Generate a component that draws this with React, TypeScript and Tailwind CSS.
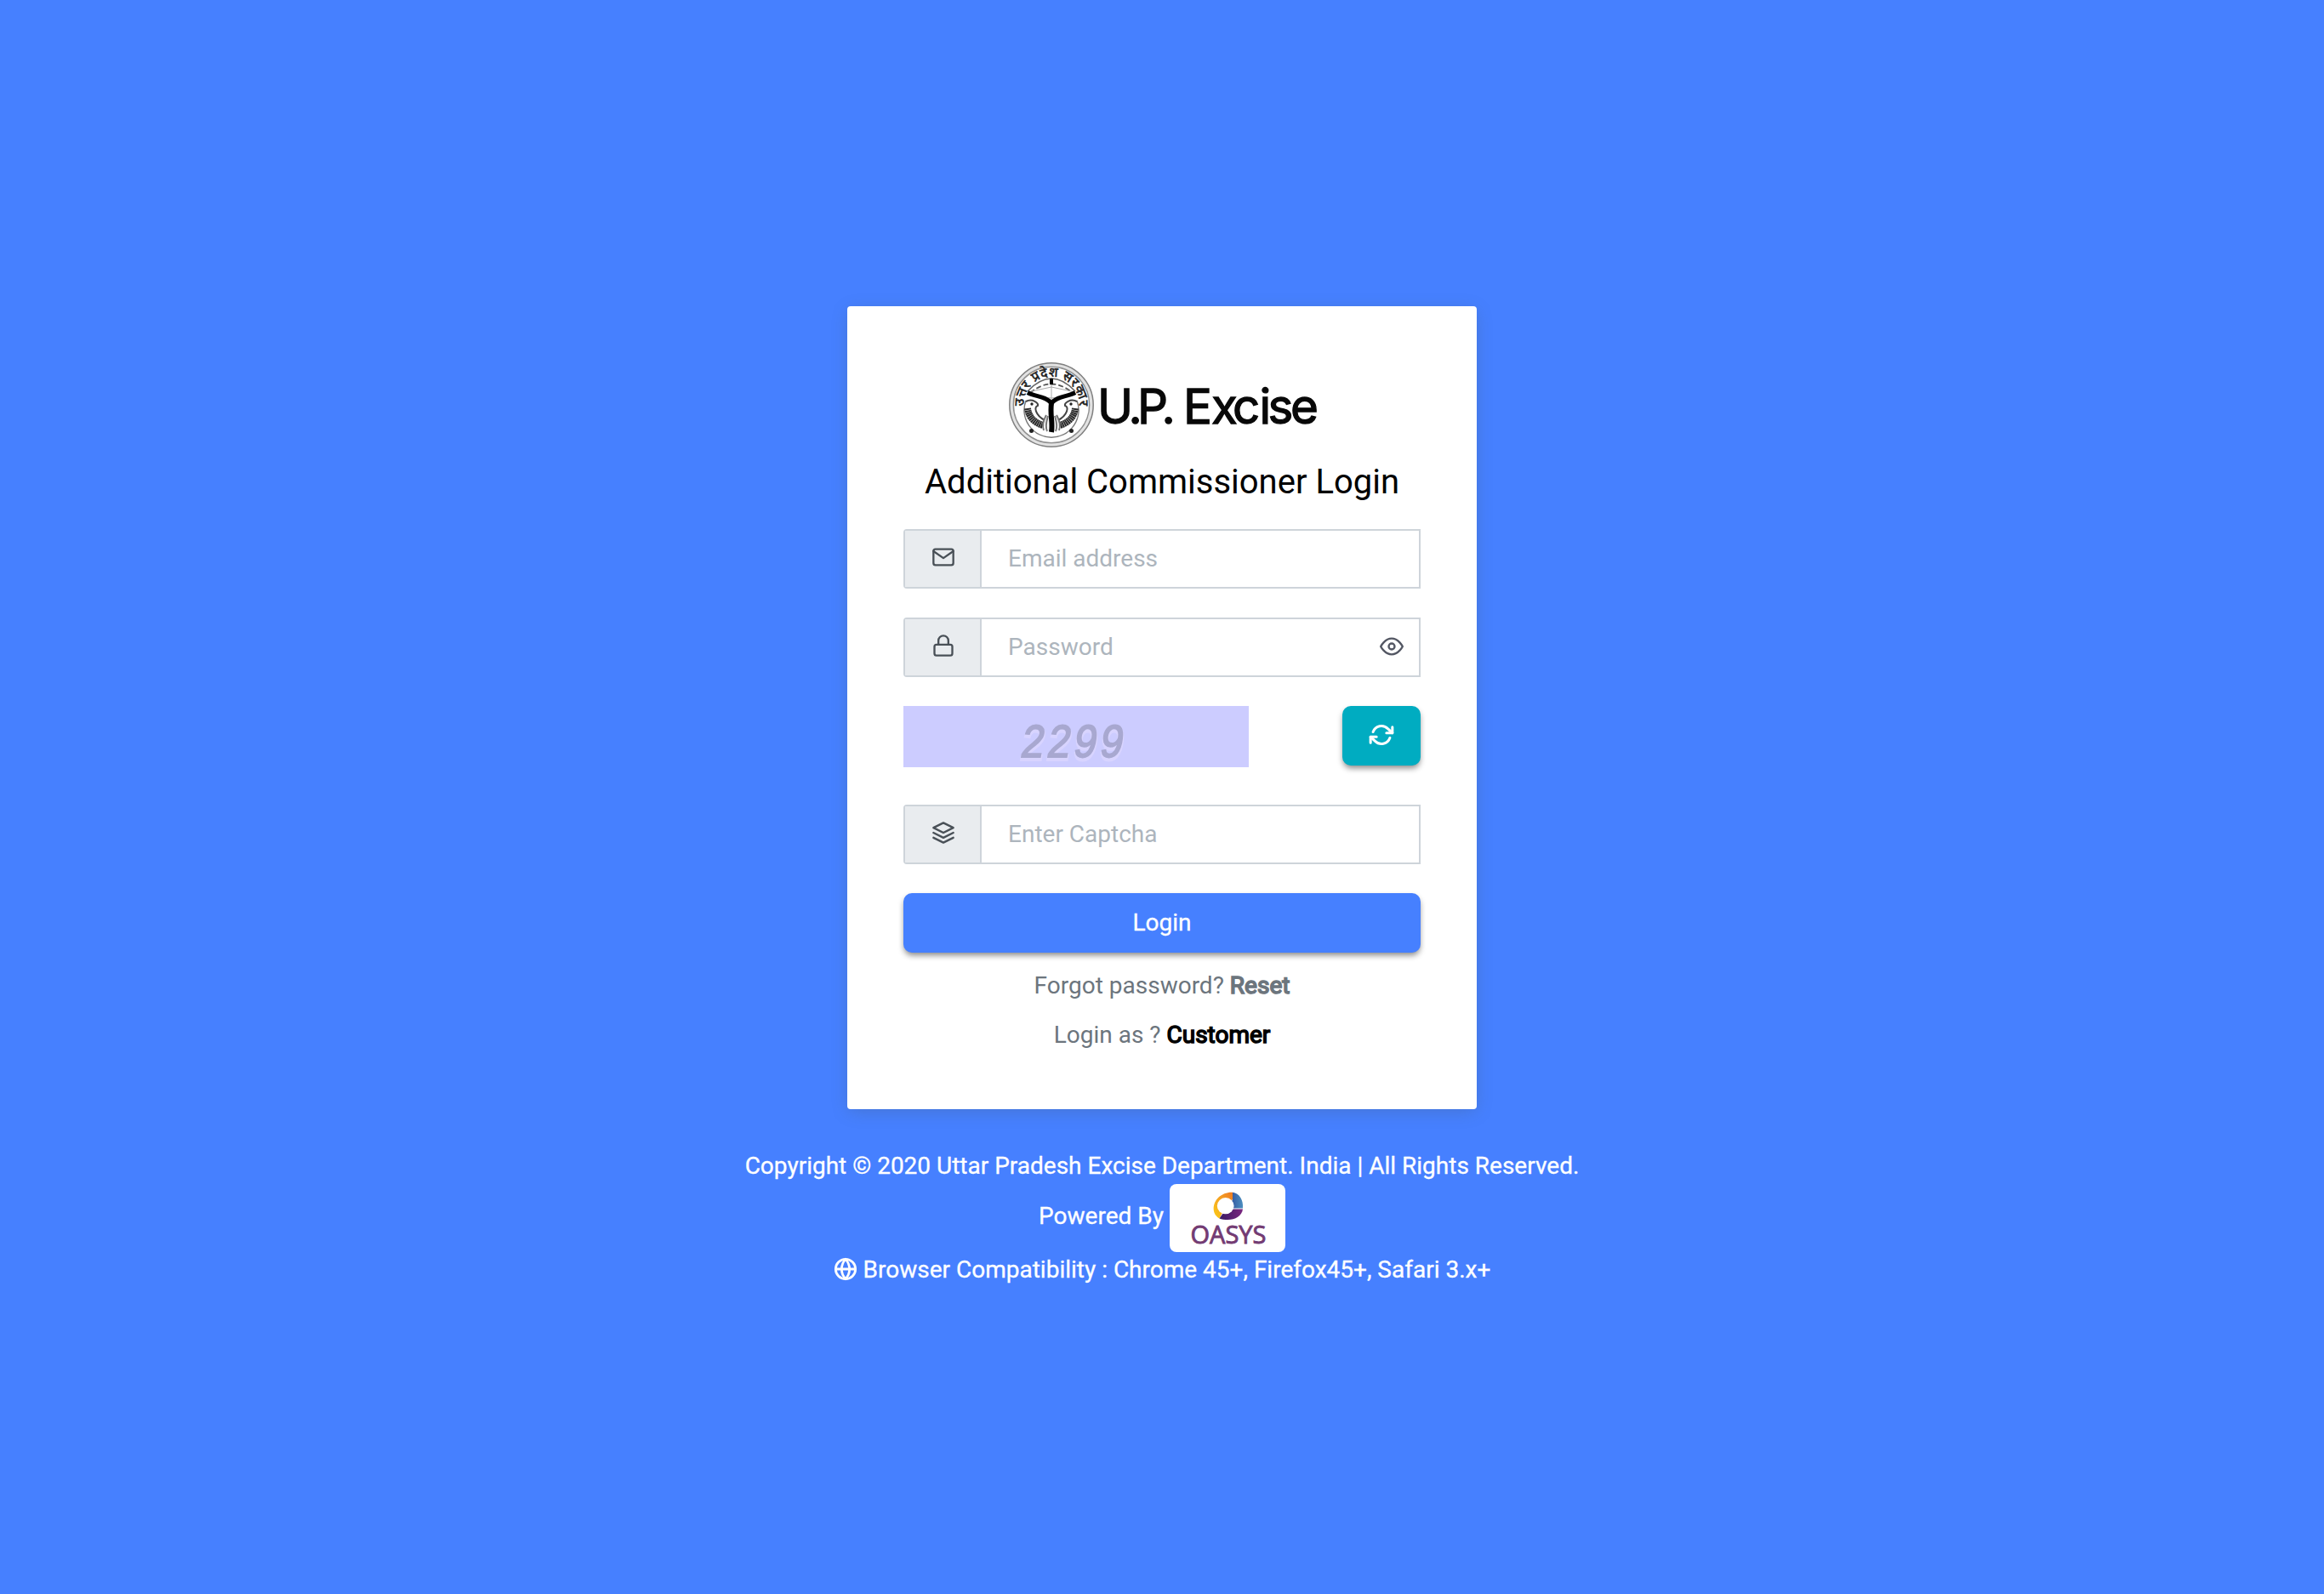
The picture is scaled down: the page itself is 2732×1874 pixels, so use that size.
import React from "react";

const feather = {
  fill: "none",
  stroke: "currentColor",
  strokeWidth: 2,
  strokeLinecap: "round" as const,
  strokeLinejoin: "round" as const,
  viewBox: "0 0 24 24",
};

function MailIcon() {
  return (
    <svg {...feather} className="size-7 overflow-visible">
      <path d="M4 4h16c1.100 0 2 .9 2 2v12c0 1.100-.9 2-2 2H4c-1.100 0-2-.9-2-2V6c0-1.100.9-2 2-2z" />
      <polyline points="22,6 12,13 2,6" />
    </svg>
  );
}

function LockIcon() {
  return (
    <svg {...feather} className="size-7 overflow-visible">
      <rect x="3" y="11" width="18" height="11" rx="2" />
      <path d="M7 11V7a5 5 0 0 1 10 0v4" />
    </svg>
  );
}

function LayersIcon() {
  return (
    <svg {...feather} className="size-7 overflow-visible">
      <polygon points="12 2 2 7 12 12 22 7 12 2" />
      <polyline points="2 17 12 22 22 17" />
      <polyline points="2 12 12 17 22 12" />
    </svg>
  );
}

function EyeIcon() {
  return (
    <svg {...feather} className="size-7 overflow-visible">
      <path d="M1 12s4-8 11-8 11 8 11 8-4 8-11 8-11-8-11-8z" />
      <circle cx="12" cy="12" r="3" />
    </svg>
  );
}

function RefreshIcon() {
  return (
    <svg {...feather} strokeWidth={2.6} className="size-7 overflow-visible">
      <polyline points="23 4 23 10 17 10" />
      <polyline points="1 20 1 14 7 14" />
      <path d="M3.51 9a9 9 0 0 1 14.850-3.360L23 10M1 14l4.640 4.360A9 9 0 0 0 20.490 15" />
    </svg>
  );
}

function GlobeIcon() {
  return (
    <svg {...feather} strokeWidth={2.4} className="inline-block size-7 overflow-visible align-[-4px]">
      <circle cx="12" cy="12" r="10" />
      <path d="M2 12h20" />
      <path d="M12 2a15.300 15.300 0 0 1 4 10 15.300 15.300 0 0 1-4 10 15.300 15.300 0 0 1-4-10 15.300 15.300 0 0 1 4-10z" />
    </svg>
  );
}

function Emblem() {
  return (
    <svg viewBox="0 0 100 100" className="size-[100px] shrink-0" fill="none" stroke="#000">
      <defs>
        <path id="arc" d="M18 55 A32.500 32.500 0 1 1 82 55" />
      </defs>
      <circle cx="50" cy="50" r="47.500" stroke="#e2e2e2" strokeWidth="4" />
      <circle cx="50" cy="50" r="49.200" stroke="#808080" strokeWidth="1.500" />
      <circle cx="50" cy="50" r="44.700" stroke="#909090" strokeWidth="1.500" />
      <path d="M20 45A32 32 0 1 0 80 45" stroke="#777" strokeWidth="1.500" />
      <path d="M22 34Q50 4 78 34" stroke="#666" strokeWidth="1.500" />
      <path d="M25 36Q50 15 75 36" stroke="#555" strokeWidth="1.800" strokeDasharray="6 3" />
      <path d="M50 20V46 M22 35L50 29L78 35 M24 36Q37 42 50 42Q63 42 76 36" stroke="#aaa" strokeWidth="1" />
      <path d="M50 19v7" strokeWidth="4" />
      <path d="M50 82C52 70 48 62 50 48" strokeWidth="6" />
      <path d="M22 35.500C32 41 42 39 50 48C58 39 68 41 78 35.500" strokeWidth="5" />
      <g id="fish">
        <path d="M22 54C23 64 30 71 40 74" stroke="#2a2a2a" strokeWidth="8" strokeDasharray="2 .4" />
        <path d="M20 46C28 42 35 48 34 51C29 52 31 62 42 68" stroke="#444" strokeWidth="2" />
        <path d="M41 80C38 72 42 66 44 62M45 81C42 74 45 67 46 63" stroke="#777" strokeWidth="2" />
        <circle cx="27" cy="49" r="1.700" fill="#222" stroke="none" />
      </g>
      <use href="#fish" transform="translate(100 0) scale(-1 1)" />
      <circle cx="26.500" cy="80.500" r="2.500" fill="#222" stroke="none" />
      <circle cx="73.500" cy="80.500" r="2.500" fill="#222" stroke="none" />
      <text fill="#222" stroke="#222" strokeWidth=".6" fontSize="15.500" textAnchor="middle" className="font-['Noto_Sans',sans-serif]">
        <textPath href="#arc" startOffset="50%" textLength="106">उत्तर प्रदेश सरकार</textPath>
      </text>
    </svg>
  );
}

function OasysLogo() {
  return (
    <svg viewBox="0 0 136 80" className="block h-[80px] w-[136px] shrink-0 rounded-lg bg-white">
      <defs>
        <linearGradient id="gold" x1="1" y1="0" x2="0" y2="1">
          <stop offset="0" stopColor="#ee7a22" />
          <stop offset=".5" stopColor="#f5a623" />
          <stop offset="1" stopColor="#fbcb14" />
        </linearGradient>
        <linearGradient id="blue">
          <stop offset="0" stopColor="#2f4f9c" />
          <stop offset="1" stopColor="#4c8fc0" />
        </linearGradient>
        <linearGradient id="plum">
          <stop offset="0" stopColor="#3a1a62" />
          <stop offset="1" stopColor="#7a2680" />
        </linearGradient>
      </defs>
      <path d="M74 9.700C62 9 51 18 51.700 30C52 35 55 38.500 58.500 40.500L66 26L74 18Z" fill="url(#gold)" />
      <path d="M74 9.700C82 10.500 87 19 86 28.500H70L74 18Z" fill="url(#blue)" />
      <path d="M86 29.500C85 37.500 77 42 68.500 42C64.500 42 61 41.500 58.500 40.500L66 29.500Z" fill="url(#plum)" />
      <ellipse cx="65.700" cy="25.700" rx="9.900" ry="9.600" fill="#fff" />
      <text x="69" y="69.800" textAnchor="middle" fontSize="30" textLength="89" lengthAdjust="spacingAndGlyphs" fill="#733b73" stroke="#733b73" strokeWidth=".9" className="font-['Open_Sans',sans-serif]">
        OASYS
      </text>
    </svg>
  );
}

function Field({ icon, label, type = "text", trailing }: { icon: React.ReactNode; label: string; type?: string; trailing?: React.ReactNode }) {
  return (
    <div className="flex h-[70px] rounded-l-[4px] border-2 border-[#ced4da] bg-white">
      <span className="flex w-[90px] shrink-0 items-center justify-center border-r-2 border-[#ced4da] bg-[#e9ecef] pb-1 pl-px text-[#495057]">
        {icon}
      </span>
      <input
        type={type}
        placeholder={label}
        className="min-w-0 flex-1 bg-transparent pl-[31px] text-[28px] outline-none placeholder:text-[#adb5bd]"
      />
      {trailing && <span className="flex items-center pr-[18px] pb-[3px] text-[#535763]">{trailing}</span>}
    </div>
  );
}

export default function App() {
  return (
    <div className="flex h-[1874px] w-full flex-col items-center bg-[#4680ff] pt-[360px] font-[Roboto,sans-serif] text-[28px] leading-[42px]">
      <main className="flex h-[944px] w-[740px] shrink-0 flex-col rounded-[4px] bg-white px-[66px] pt-[66px] shadow-[0_4px_20px_-2px_rgba(69,90,100,0.3)]">
        <div className="flex h-[100px] items-center pl-[124px]">
          <Emblem />
          <svg viewBox="0 0 262 70" className="h-[70px] w-[262px] overflow-visible">
            <text x="4 40.500 51 79.500 82 105 138 163 194.500 204.500 231" y="57" fontSize="56.500" fill="#080808" stroke="#080808" strokeWidth="1.300" className="font-[Inter,sans-serif]">
              U.P. Excise
            </text>
          </svg>
        </div>
        <h1 className="mt-[17px] h-[48px] text-center text-[40px] leading-[48px] whitespace-nowrap text-black">Additional Commissioner Login</h1>
        <form className="mt-[31px] flex flex-col">
          <Field icon={<MailIcon />} label="Email address" />
          <div className="mt-[34px]">
            <Field icon={<LockIcon />} label="Password" type="password" trailing={<EyeIcon />} />
          </div>
          <div className="mt-[34px] flex h-[72px] items-start justify-between">
            <svg viewBox="0 0 406.400 72" className="h-[72px] w-[406.4px] overflow-visible bg-[#ccccff]">
              <g transform="translate(138 60) scale(.87 1)" fontSize="55" className="font-['Liberation_Mono',monospace] italic">
                <text x="0 35.500 71 106.500" y="2.500" fill="#d8d4ff" stroke="#d8d4ff" strokeWidth="4">2299</text>
                <text x="0 35.500 71 106.500" y="0" fill="#a8a8d0" stroke="#a8a8d0" strokeWidth="1.800">2299</text>
              </g>
            </svg>
            <button type="button" className="flex h-[70px] w-[92px] items-center justify-center rounded-[10px] bg-[#00acc1] pb-[3px] text-white shadow-[0_4px_7px_-1px_rgba(0,0,0,0.48)]">
              <RefreshIcon />
            </button>
          </div>
          <div className="mt-11">
            <Field icon={<LayersIcon />} label="Enter Captcha" />
          </div>
          <button type="button" className="mt-[34px] h-[70px] rounded-[10px] bg-[#4680ff] text-white shadow-[0_4px_7px_-1px_rgba(0,0,0,0.48)] [-webkit-text-stroke:0.3px_#fff]">
            Login
          </button>
        </form>
        <p className="mt-[18px] text-center text-[#6c757d]">
          Forgot password? <a className="[-webkit-text-stroke:1.6px_#6c757d]">Reset</a>
        </p>
        <p className="mt-4 text-center text-[#6c757d]">
          Login as ? <a className="text-black [-webkit-text-stroke:1.5px_#000]">Customer</a>
        </p>
      </main>
      <footer className="mt-[46px] text-center whitespace-nowrap text-white [-webkit-text-stroke:0.3px_#fff]">
        <p>Copyright © 2020 Uttar Pradesh Excise Department. India | All Rights Reserved.</p>
        <div className="flex h-[80px] items-center justify-center gap-[7px]">
          <span className="pb-1">Powered By</span>
          <OasysLogo />
        </div>
        <p>
          <GlobeIcon /> Browser Compatibility : Chrome 45+, Firefox45+, Safari 3.x+
        </p>
      </footer>
    </div>
  );
}
